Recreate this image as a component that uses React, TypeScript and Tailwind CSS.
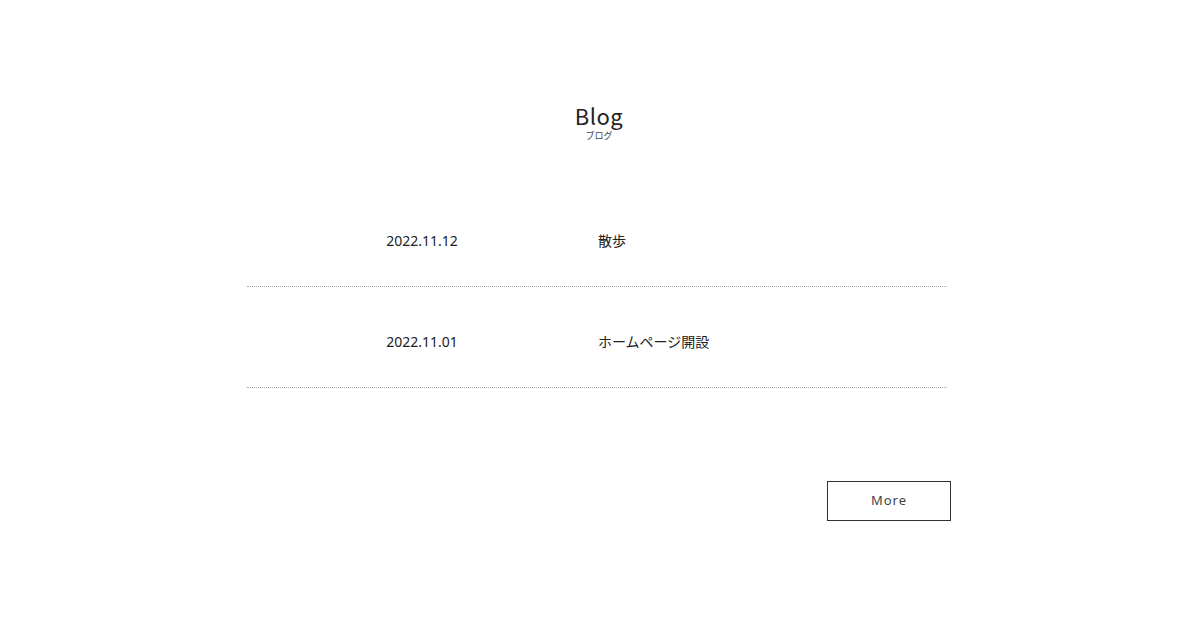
const posts = [
  { date: '2022.11.12', title: '散歩' },
  { date: '2022.11.01', title: 'ホームページ開設' },
]

export default function App() {
  return (
    <div
      className="min-h-screen bg-white text-[#333] flex justify-center pr-[2px]"
      style={{ fontFamily: '"Noto Sans", "Noto Sans CJK JP", sans-serif' }}
    >
      <section className="w-[704px] flex flex-col pt-[99px]">
        <div className="flex flex-col items-center">
          <h2
            className="text-[22px] leading-[32px] tracking-[0.5px] text-[#222]"
            style={{ fontFamily: '"Noto Sans CJK JP", "Noto Sans", sans-serif' }}
          >
            Blog
          </h2>
          <p className="text-[9px] leading-[9px] text-[#444]">ブログ</p>
        </div>

        <ul className="w-[700px] mt-[46px]">
          {posts.map((p) => (
            <li
              key={p.date}
              className="grid grid-cols-2 border-b border-dotted border-[#aaa] pt-[43px] pb-[33px] text-[14px] leading-[24px]"
            >
              <span className="text-center text-[#222]">{p.date}</span>
              <span className="pl-[1px] text-[#222]">{p.title}</span>
            </li>
          ))}
        </ul>

        <button className="self-end mt-[93px] w-[124px] h-[40px] border border-[#333] text-[13px] tracking-[1px] text-[#444]">
          More
        </button>
      </section>
    </div>
  )
}
